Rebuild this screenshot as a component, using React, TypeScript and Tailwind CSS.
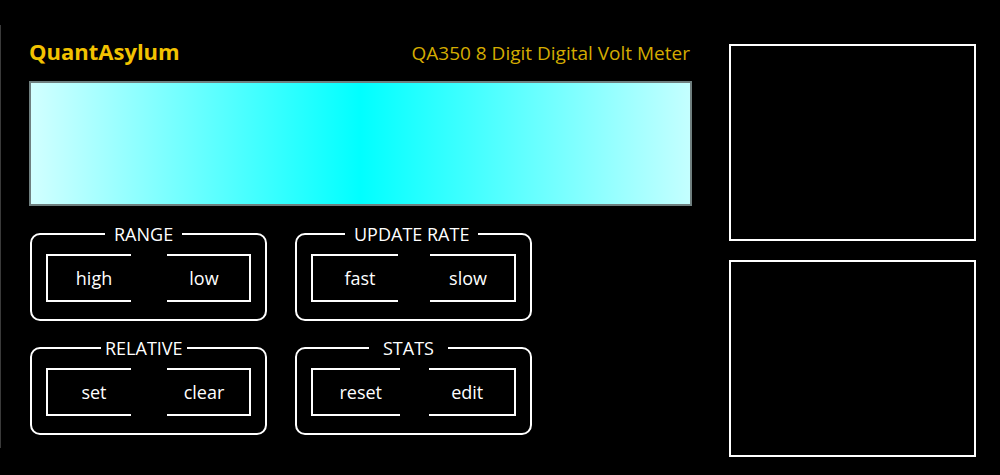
import React from "react";

type Group = {
  title: string;
  legendClass: string;
  gapClass: string;
  buttons: [string, string];
};

const groups: Group[] = [
  { title: "RANGE", legendClass: "ml-[59px] px-[9px]", gapClass: "gap-[36px]", buttons: ["high", "low"] },
  { title: "UPDATE RATE", legendClass: "ml-[34px] px-[9px]", gapClass: "gap-[32px]", buttons: ["fast", "slow"] },
  { title: "RELATIVE", legendClass: "ml-[55px] px-[4px]", gapClass: "gap-[36px]", buttons: ["set", "clear"] },
  { title: "STATS", legendClass: "ml-[58px] px-[14px]", gapClass: "gap-[29px]", buttons: ["reset", "edit"] },
];

function ButtonGroup({ group }: { group: Group }) {
  const [left, right] = group.buttons;
  return (
    <fieldset className="w-[237px] rounded-[10px] border-2 border-white px-[14px] pt-[10px] pb-[17px]">
      <legend className={`${group.legendClass} text-[18px] leading-[20px] text-white`}>{group.title}</legend>
      <div className={`flex ${group.gapClass}`}>
        <button
          type="button"
          className="flex h-[48px] flex-1 items-center justify-center border-y-2 border-l-2 border-white pl-[9px] text-[18px] text-white"
        >
          {left}
        </button>
        <button
          type="button"
          className="flex h-[48px] flex-1 items-center justify-center border-y-2 border-r-2 border-white pr-[8px] text-[18px] text-white"
        >
          {right}
        </button>
      </div>
    </fieldset>
  );
}

export default function App() {
  return (
    <div className="flex h-[475px] w-[1000px] overflow-hidden bg-black font-['Open_Sans',sans-serif]">
      <div className="mt-[25px] h-[423px] w-px bg-[#3a3a3a]" />

      <div className="ml-[28px] w-[663px] pt-[36px]">
        <div className="flex h-[30px] items-baseline justify-between pr-[2px]">
          <span className="text-[22px] leading-[30px] font-bold text-[#f2c200]">QuantAsylum</span>
          <span className="text-[19px] leading-[30px] text-[#d4ac00]">QA350 8 Digit Digital Volt Meter</span>
        </div>

        <div className="mt-[15px] h-[125px] w-full border-2 border-[#6f7f7f] bg-[linear-gradient(to_right,#d2ffff,#00ffff_50%,#c4ffff)]" />

        <div className="mt-[18px] grid grid-cols-[237px_237px] gap-x-[28px] gap-y-[17px] pl-px">
          {groups.map((g) => (
            <ButtonGroup key={g.title} group={g} />
          ))}
        </div>
      </div>

      <div className="ml-[37px] flex flex-col gap-[19px] pt-[44px]">
        <div className="h-[197px] w-[247px] border-2 border-white" />
        <div className="h-[197px] w-[247px] border-2 border-white" />
      </div>
    </div>
  );
}
